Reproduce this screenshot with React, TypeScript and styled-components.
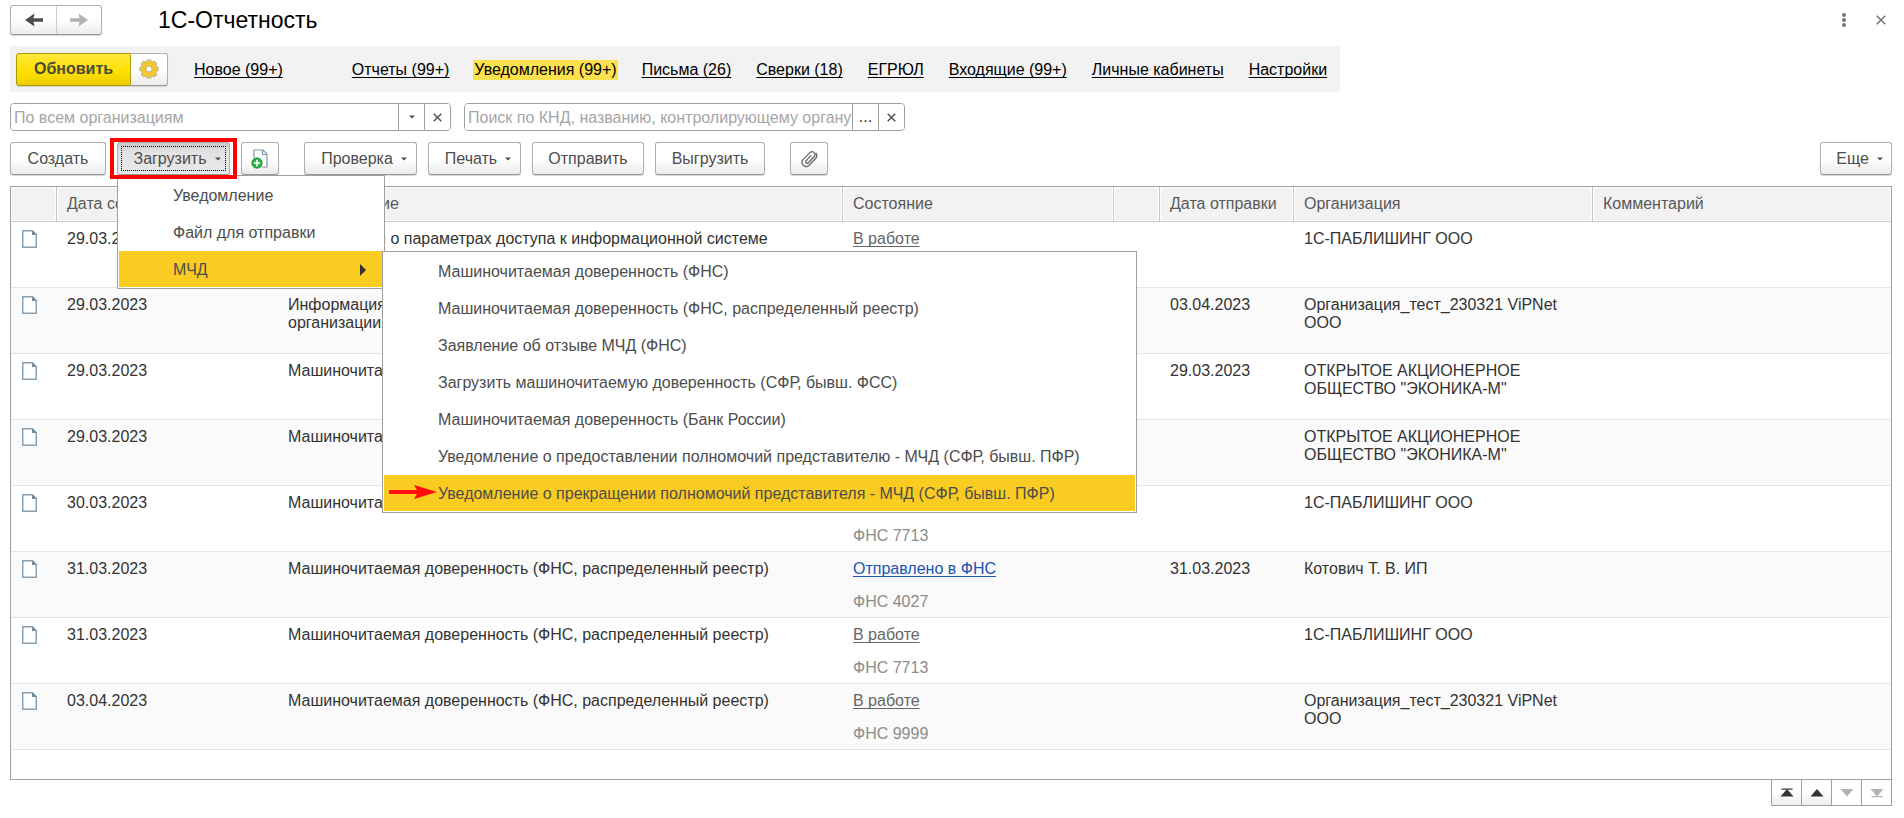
import React from 'react';
import styled, { createGlobalStyle, css } from 'styled-components';

const GlobalStyle = createGlobalStyle`
  * { box-sizing: border-box; }
  body {
    margin: 0;
    background: #fff;
    color: #333;
    font: 16px/18px "Liberation Sans", Arial, sans-serif;
  }
  button, input { font: inherit; }
`;

const Page = styled.main`
  padding: 5px 12px 12px 10px;
`;

const raised = css`
  background: linear-gradient(#fff 50%, #ebebeb);
  border: 1px solid #b0b0b0;
  border-bottom-color: #989898;
  border-radius: 3px;
  box-shadow: 0 1px 1px #d4d4d4;
  color: #4d4d4d;
`;

const TitleBar = styled.header`
  display: flex;
  align-items: center;
  height: 30px;
`;

const History = styled.div`
  ${raised}
  display: flex;
  height: 30px;
`;

const HistoryButton = styled.button`
  display: flex;
  align-items: center;
  justify-content: center;
  width: 45px;
  padding: 0;
  border: 0;
  background: none;
  & + & { border-left: 1px solid #d0d0d0; }
`;

const Title = styled.h1`
  flex: 1;
  margin: 0 0 0 56px;
  color: #000;
  font-size: 23px;
  font-weight: 400;
  line-height: 26px;
`;

const WindowButton = styled.button`
  display: flex;
  align-items: center;
  justify-content: center;
  width: 52px;
  height: 28px;
  padding: 0;
  border: 0;
  background: none;
  &:last-child { width: 22px; }
`;

const WindowTools = styled.div`
  display: flex;
`;

const Sections = styled.nav`
  display: flex;
  align-items: center;
  width: fit-content;
  height: 46px;
  margin-top: 11px;
  padding: 0 12px 0 6px;
  background: #f2f2f2;
`;

const Refresh = styled.div`
  display: flex;
  height: 33px;
  margin-right: 25px;
`;

const RefreshButton = styled.button`
  width: 115px;
  padding: 0;
  border: 1px solid #a89a00;
  border-radius: 3px 0 0 3px;
  background: linear-gradient(#ffe83c, #ffe000 55%, #ecce00);
  box-shadow: 0 1px 1px #d4d4d4;
  color: #4a4a3a;
  font-weight: 700;
`;

const GearButton = styled.button`
  ${raised}
  display: flex;
  align-items: center;
  justify-content: center;
  width: 37px;
  padding: 0;
  border-left: 0;
  border-radius: 0 3px 3px 0;
`;

const SectionLinks = styled.div`
  display: flex;
  gap: 23px;
  padding-top: 2px;
`;

const SectionLink = styled.a<{ $current?: boolean; $first?: boolean }>`
  margin-right: ${p => (p.$first ? 44 : 0)}px;
  padding: 1px 1px;
  background: ${p => (p.$current ? '#fce14f' : 'none')};
  color: #000;
  text-decoration: ${p => (p.$current ? 'none' : 'underline')};
  text-decoration-skip-ink: none;
  text-underline-offset: 2px;
`;

const Filters = styled.form`
  display: flex;
  gap: 13px;
  margin-top: 11px;
`;

const Field = styled.div`
  display: flex;
  width: 441px;
  height: 28px;
  overflow: hidden;
  border: 1px solid #a0a0a0;
  border-radius: 4px;
`;

const FieldInput = styled.input`
  flex: 1;
  min-width: 0;
  padding: 2px 0 0 3px;
  border: 0;
  background: #fff;
  color: #333;
  &::placeholder { color: #a6a6a6; opacity: 1; }
`;

const FieldButton = styled.button`
  display: flex;
  align-items: center;
  justify-content: center;
  width: 26px;
  padding: 0;
  border: 0;
  border-left: 1px solid #a0a0a0;
  background: #fff;
  color: #333;
`;

const Toolbar = styled.div`
  display: flex;
  gap: 11px;
  height: 33px;
  margin-top: 11px;
`;

const ToolButton = styled.button<{ $gap?: boolean; $width: number; $pressed?: boolean; $end?: boolean }>`
  ${raised}
  display: flex;
  align-items: center;
  justify-content: center;
  gap: 8px;
  width: ${p => p.$width}px;
  height: 33px;
  padding: 0;
  margin-left: ${p => (p.$end ? 'auto' : p.$gap ? '14px' : '0')};
  ${p => p.$pressed && css`
    background: linear-gradient(#c9c9c9, #e2e2e2 25%, #e9e9e9);
    outline: 1px dotted #000;
    outline-offset: -5px;
  `}
`;

const WithCaret = styled.span`
  padding-left: 7px;
`;

const MenuAnchor = styled.div`
  position: relative;
`;

const Highlight = styled.div`
  position: absolute;
  inset: -4px -7px;
  z-index: 3;
  border: 4px solid #fe0000;
  pointer-events: none;
`;

const Menu = styled.ul<{ $sub?: boolean }>`
  position: absolute;
  z-index: 2;
  top: ${p => (p.$sub ? '0' : '100%')};
  left: ${p => (p.$sub ? 'calc(100% - 1px)' : '0')};
  display: flex;
  flex-direction: column;
  gap: 1px;
  width: ${p => (p.$sub ? 755 : 268)}px;
  margin: 0;
  padding: 1px;
  border: 1px solid #a0a0a0;
  background: #fff;
  list-style: none;
`;

const MenuItem = styled.li`
  position: relative;
`;

const MenuButton = styled.button<{ $selected?: boolean }>`
  display: flex;
  align-items: center;
  justify-content: space-between;
  width: 100%;
  height: 36px;
  padding: 2px 17px 0 54px;
  border: 0;
  background: ${p => (p.$selected ? '#facb20' : 'none')};
  color: #4d4d4d;
  text-align: left;
  white-space: nowrap;
`;

const Pointer = styled.svg`
  position: absolute;
  top: 10px;
  left: 5px;
`;

const List = styled.section`
  min-height: 594px;
  margin-top: 11px;
  border: 1px solid #a0a0a0;
`;

const Table = styled.table`
  width: 100%;
  border-collapse: separate;
  border-spacing: 0;
  table-layout: fixed;
`;

const HeadCell = styled.th`
  height: 35px;
  padding: 0 10px;
  border-right: 1px solid #c8c8c8;
  border-bottom: 1px solid #c8c8c8;
  background: #f2f2f2;
  box-shadow: inset 0 0 0 1px #fff;
  color: #595959;
  font-weight: 400;
  text-align: left;
  white-space: nowrap;
  &:last-child { border-right: 0; }
`;

const Row = styled.tr`
  &:nth-child(even) { background: #fafafa; }
`;

const Cell = styled.td`
  height: 66px;
  padding: 8px 10px 6px;
  border-bottom: 1px solid #e5e5e5;
  vertical-align: top;
`;

const IconCell = styled(Cell)`
  padding-left: 11px;
`;

const StateLink = styled.a<{ $sent?: boolean }>`
  display: block;
  width: fit-content;
  color: ${p => (p.$sent ? '#1a56b4' : '#666')};
  text-decoration: underline;
  text-decoration-skip-ink: none;
  text-underline-offset: 2px;
`;

const Office = styled.div`
  margin-top: 15px;
  color: #8c8c8c;
`;

const DocIcon = styled.svg`
  display: block;
`;

const Pager = styled.div`
  display: flex;
  justify-content: flex-end;
  margin-top: -1px;
`;

const PageButton = styled.button`
  display: flex;
  align-items: center;
  justify-content: center;
  width: 31px;
  height: 27px;
  padding: 0;
  border: 1px solid #a0a0a0;
  background: linear-gradient(#fff 40%, #eee);
  & + & { margin-left: -1px; }
  &:disabled { background: #fff; }
`;

const Caret = () => (
  <svg width="6" height="4" viewBox="0 0 6 4" aria-hidden="true">
    <path d="M0 0.5h6L3 3.5z" fill="#4d4d4d" />
  </svg>
);

const Cross = ({ color, size = 9 }: { color: string; size?: number }) => (
  <svg width={size} height={size} viewBox="0 0 9 9" aria-hidden="true">
    <path d="M0.7 0.7l7.6 7.6M8.3 0.7L0.7 8.3" stroke={color} strokeWidth="1.4" />
  </svg>
);

const HistoryArrow = ({ forward }: { forward?: boolean }) => (
  <svg width="18" height="14" viewBox="0 0 18 14" aria-hidden="true">
    <path
      d={forward ? 'M0 5.3h9.5L8.5 0.5 18 7 8.5 13.5l1-4.8H0z' : 'M18 5.3H8.5l1-4.8L0 7l9.5 6.5-1-4.8H18z'}
      fill={forward ? '#b3b3b3' : '#4d4d4d'}
    />
  </svg>
);

const Gear = () => (
  <svg width="20" height="20" viewBox="0 0 20 20" aria-hidden="true">
    <g fill="#b5ad94">
      {[0, 45, 90, 135].map(a => (
        <rect key={a} x="7.4" y="0.4" width="5.2" height="19.2" rx="1" transform={`rotate(${a} 10 10)`} />
      ))}
    </g>
    <circle cx="10" cy="10" r="7.6" fill="#b5ad94" />
    <g fill="#f5c928">
      {[0, 45, 90, 135].map(a => (
        <rect key={a} x="8.2" y="1.2" width="3.6" height="17.6" transform={`rotate(${a} 10 10)`} />
      ))}
    </g>
    <circle cx="10" cy="10" r="6.9" fill="#f5c928" />
    <circle cx="10" cy="10" r="3" fill="#fff" stroke="#b5ad94" />
  </svg>
);

const AddDocument = () => (
  <svg width="18" height="20" viewBox="0 0 18 20" aria-hidden="true">
    <path d="M3 1h9l4 4v13H3z" fill="#fff" stroke="#7f98a8" strokeWidth="1.2" />
    <path d="M11.5 1v4.5H16" fill="none" stroke="#7f98a8" strokeWidth="1.2" />
    <circle cx="6" cy="14" r="6" fill="#fff" />
    <circle cx="6" cy="14" r="5.2" fill="#2fae48" stroke="#14882a" strokeWidth="0.8" />
    <path d="M6 10.8v6.4M2.8 14h6.4" stroke="#fff" strokeWidth="1.6" />
  </svg>
);

const Clip = () => (
  <svg width="18" height="18" viewBox="0 0 18 18" fill="none" stroke="#666" strokeWidth="1.3" strokeLinecap="round" aria-hidden="true">
    <path d="M10.8 5.6L6 10.8a1.5 1.5 0 0 0 2.1 2.1l5.9-6.2a2.9 2.9 0 0 0-4.1-4.1L3 9.6a4.2 4.2 0 0 0 5.9 5.9l6.6-7a4.2 4.2 0 0 0 0.6-5.2" />
  </svg>
);

const Doc = () => (
  <DocIcon width="15" height="18" viewBox="0 0 15 18" aria-hidden="true">
    <path d="M0.75 0.75h9.5l4 4v12.5H0.75z" fill="#fff" stroke="#8aa2b2" strokeWidth="1.5" />
    <path d="M10 0l5 5h-5z" fill="#6f8b9c" />
  </DocIcon>
);

const PageArrow = ({ down, edge }: { down?: boolean; edge?: boolean }) => (
  <svg width="14" height="10" viewBox="0 0 14 10" fill={down ? '#b3b3b3' : '#333'} aria-hidden="true">
    <path d={down ? 'M0.5 1h13L7 8.5z' : 'M0.5 8.5h13L7 1z'} />
    {edge && <rect x="1.5" y={down ? 8 : 0.5} width="11" height="1.2" />}
  </svg>
);

const sections = [
  'Новое (99+)', 'Отчеты (99+)', 'Уведомления (99+)', 'Письма (26)', 'Сверки (18)',
  'ЕГРЮЛ', 'Входящие (99+)', 'Личные кабинеты', 'Настройки',
];

const powerMenu = [
  'Машиночитаемая доверенность (ФНС)',
  'Машиночитаемая доверенность (ФНС, распределенный реестр)',
  'Заявление об отзыве МЧД (ФНС)',
  'Загрузить машиночитаемую доверенность (СФР, бывш. ФСС)',
  'Машиночитаемая доверенность (Банк России)',
  'Уведомление о предоставлении полномочий представителю - МЧД (СФР, бывш. ПФР)',
  'Уведомление о прекращении полномочий представителя - МЧД (СФР, бывш. ПФР)',
];

const columns: { title: string; width?: number }[] = [
  { title: '', width: 46 },
  { title: 'Дата создания', width: 221 },
  { title: 'Наименование', width: 565 },
  { title: 'Состояние', width: 271 },
  { title: '', width: 46 },
  { title: 'Дата отправки', width: 134 },
  { title: 'Организация', width: 299 },
  { title: 'Комментарий' },
];

const registry = 'Машиночитаемая доверенность (ФНС, распределенный реестр)';
const access = 'Информация о параметрах доступа к информационной системе';

interface Notice {
  date: string;
  name: string;
  office: string;
  sent?: string;
  org: string;
}

const notices: Notice[] = [
  { date: '29.03.2023', name: access, office: 'ФНС 7713', org: '1С-ПАБЛИШИНГ ООО' },
  { date: '29.03.2023', name: `${access} организации`, office: 'ФНС 7713', sent: '03.04.2023', org: 'Организация_тест_230321 ViPNet ООО' },
  { date: '29.03.2023', name: registry, office: 'ФНС 7713', sent: '29.03.2023', org: 'ОТКРЫТОЕ АКЦИОНЕРНОЕ ОБЩЕСТВО "ЭКОНИКА-М"' },
  { date: '29.03.2023', name: registry, office: 'ФНС 7713', org: 'ОТКРЫТОЕ АКЦИОНЕРНОЕ ОБЩЕСТВО "ЭКОНИКА-М"' },
  { date: '30.03.2023', name: registry, office: 'ФНС 7713', org: '1С-ПАБЛИШИНГ ООО' },
  { date: '31.03.2023', name: registry, office: 'ФНС 4027', sent: '31.03.2023', org: 'Котович Т. В. ИП' },
  { date: '31.03.2023', name: registry, office: 'ФНС 7713', org: '1С-ПАБЛИШИНГ ООО' },
  { date: '03.04.2023', name: registry, office: 'ФНС 9999', org: 'Организация_тест_230321 ViPNet ООО' },
];

export default function App() {
  return (
    <Page>
      <GlobalStyle />
      <TitleBar>
        <History>
          <HistoryButton aria-label="Назад"><HistoryArrow /></HistoryButton>
          <HistoryButton aria-label="Вперед"><HistoryArrow forward /></HistoryButton>
        </History>
        <Title>1С-Отчетность</Title>
        <WindowTools>
          <WindowButton aria-label="Меню">
            <svg width="4" height="14" viewBox="0 0 4 14" fill="#777" aria-hidden="true">
              <circle cx="2" cy="2" r="2" /><circle cx="2" cy="7" r="2" /><circle cx="2" cy="12" r="2" />
            </svg>
          </WindowButton>
          <WindowButton aria-label="Закрыть"><Cross color="#777" size={10} /></WindowButton>
        </WindowTools>
      </TitleBar>

      <Sections>
        <Refresh>
          <RefreshButton>Обновить</RefreshButton>
          <GearButton aria-label="Настройка"><Gear /></GearButton>
        </Refresh>
        <SectionLinks>
          {sections.map((label, i) => (
            <SectionLink key={label} href="#" $first={i === 0} $current={i === 2}>{label}</SectionLink>
          ))}
        </SectionLinks>
      </Sections>

      <Filters>
        <Field>
          <FieldInput aria-label="Организация" placeholder="По всем организациям" />
          <FieldButton type="button" aria-label="Выбрать"><Caret /></FieldButton>
          <FieldButton type="button" aria-label="Очистить"><Cross color="#4d4d4d" /></FieldButton>
        </Field>
        <Field>
          <FieldInput aria-label="Поиск" placeholder="Поиск по КНД, названию, контролирующему органу" />
          <FieldButton type="button">...</FieldButton>
          <FieldButton type="button" aria-label="Очистить"><Cross color="#4d4d4d" /></FieldButton>
        </Field>
      </Filters>

      <Toolbar>
        <ToolButton $width={96}>Создать</ToolButton>
        <MenuAnchor>
          <ToolButton $width={113} $pressed><WithCaret>Загрузить</WithCaret><Caret /></ToolButton>
          <Highlight />
          <Menu>
            <MenuItem><MenuButton>Уведомление</MenuButton></MenuItem>
            <MenuItem><MenuButton>Файл для отправки</MenuButton></MenuItem>
            <MenuItem>
              <MenuButton $selected>
                МЧД
                <svg width="6" height="12" viewBox="0 0 6 12" aria-hidden="true"><path d="M0 0l6 6-6 6z" fill="#333" /></svg>
              </MenuButton>
              <Menu $sub>
                {powerMenu.map((label, i) => {
                  const selected = i === powerMenu.length - 1;
                  return (
                    <MenuItem key={label}>
                      <MenuButton $selected={selected}>{label}</MenuButton>
                      {selected && (
                        <Pointer width="48" height="14" viewBox="0 0 48 14" aria-hidden="true">
                          <path d="M0 5h28L25 0l23 7-23 7 3-5H0z" fill="#fe0e0e" />
                        </Pointer>
                      )}
                    </MenuItem>
                  );
                })}
              </Menu>
            </MenuItem>
          </Menu>
        </MenuAnchor>
        <ToolButton $width={38} aria-label="Добавить документ"><AddDocument /></ToolButton>
        <ToolButton $width={113} $gap><WithCaret>Проверка</WithCaret><Caret /></ToolButton>
        <ToolButton $width={93}><WithCaret>Печать</WithCaret><Caret /></ToolButton>
        <ToolButton $width={112}>Отправить</ToolButton>
        <ToolButton $width={110}>Выгрузить</ToolButton>
        <ToolButton $width={38} $gap aria-label="Вложения"><Clip /></ToolButton>
        <ToolButton $width={72} $end><WithCaret>Еще</WithCaret><Caret /></ToolButton>
      </Toolbar>

      <List>
        <Table>
          <colgroup>
            {columns.map((c, i) => <col key={i} width={c.width} />)}
          </colgroup>
          <thead>
            <tr>{columns.map((c, i) => <HeadCell key={i}>{c.title}</HeadCell>)}</tr>
          </thead>
          <tbody>
            {notices.map((n, i) => (
              <Row key={i}>
                <IconCell><Doc /></IconCell>
                <Cell>{n.date}</Cell>
                <Cell>{n.name}</Cell>
                <Cell>
                  <StateLink href="#" $sent={!!n.sent}>{n.sent ? 'Отправлено в ФНС' : 'В работе'}</StateLink>
                  <Office>{n.office}</Office>
                </Cell>
                <Cell />
                <Cell>{n.sent}</Cell>
                <Cell>{n.org}</Cell>
                <Cell />
              </Row>
            ))}
          </tbody>
        </Table>
      </List>
      <Pager>
        <PageButton aria-label="В начало"><PageArrow edge /></PageButton>
        <PageButton aria-label="Вверх"><PageArrow /></PageButton>
        <PageButton aria-label="Вниз" disabled><PageArrow down /></PageButton>
        <PageButton aria-label="В конец" disabled><PageArrow down edge /></PageButton>
      </Pager>
    </Page>
  );
}
